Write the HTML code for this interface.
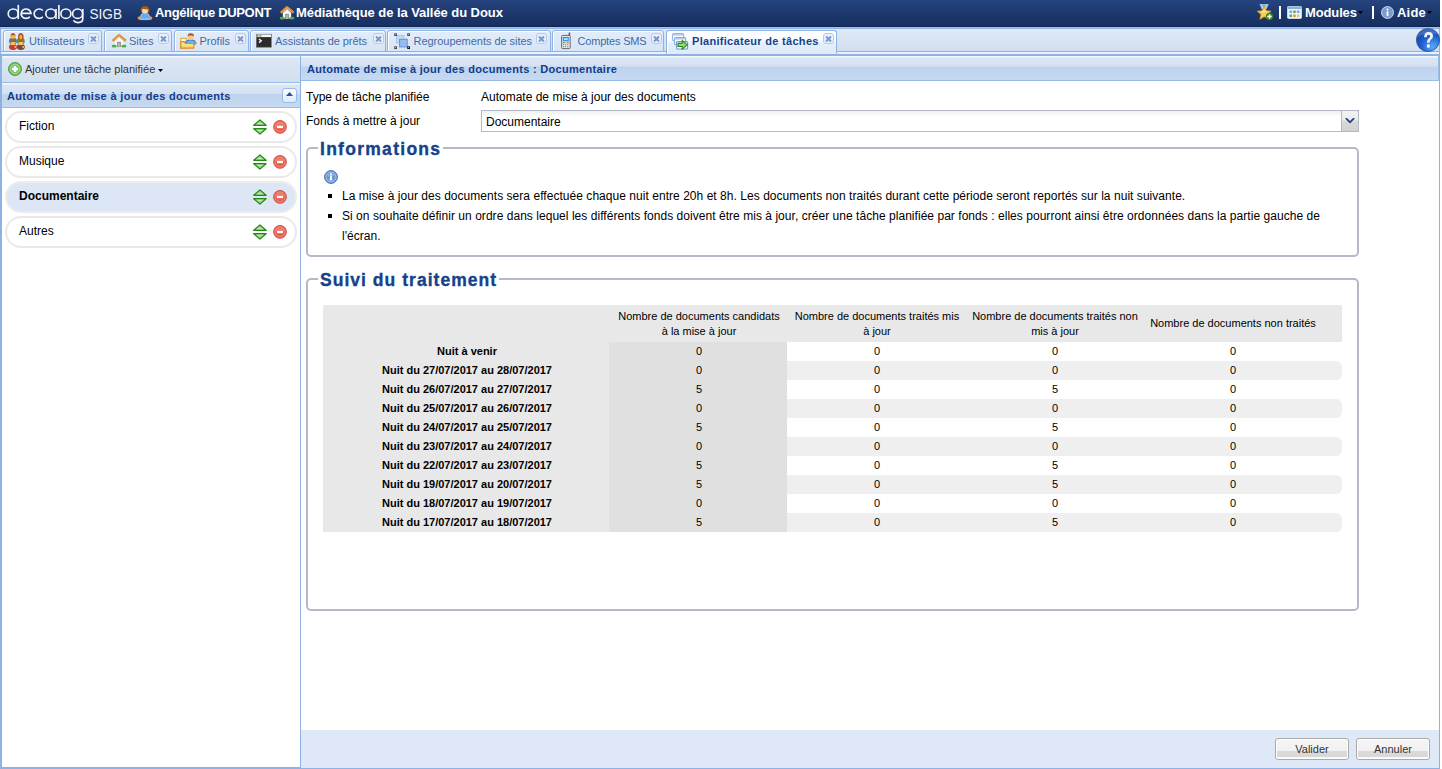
<!DOCTYPE html>
<html><head><meta charset="utf-8">
<style>
*{margin:0;padding:0;box-sizing:border-box}
html,body{width:1442px;height:769px;overflow:hidden;background:#fff;font-family:"Liberation Sans",sans-serif}
.a{position:absolute}
svg{position:absolute;overflow:visible}
#hdr{position:absolute;left:0;top:0;width:1440px;height:27px;background:linear-gradient(#25447f,#1d386d 50%,#183062 92%,#10254f);}
#hdr .t{position:absolute;color:#fff;font-weight:bold;font-size:13px;white-space:nowrap;top:6px;line-height:14px}
#strip{position:absolute;left:0;top:27px;width:1440px;height:29px;background:linear-gradient(#e1e9f5,#cedbee);border-left:1px solid #8db2e3;border-right:1px solid #8db2e3}
#strip .top{position:absolute;left:0;top:0;width:100%;height:2px;background:linear-gradient(#a3c1ea 50%,#8fb3e3 50%)}
#strip .bot{position:absolute;left:0;top:24px;width:100%;height:5px;background:linear-gradient(#8db2e3 20%,#e8f1fc 20%,#e8f1fc 60%,#8db2e3 60%)}
.tab{position:absolute;top:3px;height:22px;border:1px solid #8db2e3;border-radius:3px 3px 0 0;background:linear-gradient(#e3edfa,#d5e4f7);box-shadow:inset 1px 1px 0 #fff}
.tab .tx{position:absolute;left:25px;top:4px;font-size:11px;color:#416aa3;white-space:nowrap;line-height:13px}
.tab .cl{position:absolute;top:2px;width:11px;height:11px;border:1px solid #b3caed;border-radius:3px;background:#eaf1fb}
.tab .cl:before,.tab .cl:after{content:"";position:absolute;left:1px;top:4px;width:7px;height:2px;background:#7898cc;transform:rotate(45deg)}
.tab .cl:after{transform:rotate(-45deg)}
.tab.act{height:24px;border-bottom:0;background:linear-gradient(#fff 0,#f8fbff 9px,#e4eefb 13px,#dfeafa);}
.tab.act .tx{color:#15428b;font-weight:bold}

#lp{position:absolute;left:0;top:56px;width:301px;height:713px;border-left:2px solid #8db2e3;border-right:1px solid #8db2e3;border-bottom:2px solid #8db2e3;background:#fff}
#ltb{position:absolute;left:0;top:0;width:298px;height:27px;background:linear-gradient(#f3f7fc 0,#f3f7fc 1px,#dde7f4 2px,#d2dff0);border-bottom:1px solid #99bbe8}
#lhd{position:absolute;left:0;top:27px;width:298px;height:25px;background:linear-gradient(#f1f6fc 0,#f1f6fc 1px,#dbe6f5 2px,#d4e1f3 11px,#bed3ef 11px,#c7d9f1);border-bottom:1px solid #99bbe8}
.pill{position:absolute;left:3px;width:292px;height:32px;border:2px solid #e9e9e9;border-radius:16px;background:#fff}
.pill .tx{position:absolute;left:12px;top:6px;font-size:12px;color:#000;line-height:14px}
.pill.sel{background:#dde6f4;border-color:#ececec}
.pill.sel .tx{font-weight:bold;font-size:12px;top:6px}
#rp{position:absolute;left:300px;top:56px;width:1140px;height:713px;border-left:1px solid #8db2e3;border-right:1px solid #8db2e3;border-bottom:1px solid #8db2e3;background:#fff}
#rhd{position:absolute;left:0;top:0;width:1138px;border-right:1px solid #99bbe8;height:25px;background:linear-gradient(#f1f6fc 0,#f1f6fc 1px,#dbe6f5 2px,#d4e1f3 10px,#bed3ef 11px,#c7d9f1);border-bottom:1px solid #99bbe8}
.hdtx{position:absolute;font-weight:bold;font-size:11px;color:#113d89;white-space:nowrap;line-height:13px}
.lbl{position:absolute;font-size:12px;color:#000;white-space:nowrap;line-height:14px}
.fs{position:absolute;border:2px solid #b5b8c8;border-radius:5px}
.lg{position:absolute;background:#fff;-webkit-text-stroke:.35px #15428b;padding:0 2px 0 2px;font-size:17.5px;font-weight:bold;color:#15428b;letter-spacing:.88px;line-height:18px;white-space:nowrap}
.btn{position:absolute;top:682px;width:74px;height:22px;border:1px solid #a9a9a9;border-radius:3px;background:linear-gradient(#f4f4f4 0,#f1f1f1 12px,#dadada 12px,#d8d8d8 18px,#f8f8f8 18px);box-shadow:inset 0 0 0 1px #fff;font-size:11px;color:#333;text-align:center;line-height:21px}
table{border-collapse:collapse}
#tb{position:absolute;left:15px;top:25px;width:1019px;font-size:11px;color:#000}
</style></head><body>
<div id="hdr">
  <svg style="left:0;top:0" width="130" height="27" viewBox="0 0 130 27"><g fill="none" stroke="#f3f5f9" stroke-width="1.65">
<ellipse cx="13.2" cy="13.7" rx="5" ry="4.7"/><path d="M18.3 4.9 V19.1"/>
<path d="M21.1 13.3 H31 A4.95 4.7 0 1 0 29.9 16.7"/>
<path d="M42.8 10.5 A5 4.7 0 1 0 42.8 16.9"/>
<ellipse cx="50.8" cy="13.7" rx="5" ry="4.7"/><path d="M56 8.9 V19.1"/>
<path d="M58.9 4.9 V19.1"/>
<ellipse cx="65.9" cy="13.7" rx="5" ry="4.7"/>
<ellipse cx="77.6" cy="13.7" rx="5" ry="4.7"/><path d="M82.8 8.9 V18.5 Q82.8 22.6 78 22.6 Q74.8 22.6 73.4 20.4"/>
</g><text x="89.5" y="19" font-family="Liberation Sans" font-size="15" fill="#eef1f7" textLength="32.5" lengthAdjust="spacingAndGlyphs">SIGB</text></svg>
  <!-- user icon -->
  <svg style="left:137px;top:5px" width="16" height="16" viewBox="0 0 16 16"><path d="M5.2 8.6 L10.8 8.6 L13.6 12.6 L12.6 14.6 H3.4 L2.4 12.6Z" fill="#5eaaf4" stroke="#d6e8fb" stroke-width=".7"/><path d="M4 12.8 Q8 14.2 12 12.8 V14.2 H4Z" fill="#7cc0ff"/><circle cx="2.3" cy="13.1" r="1.7" fill="#f39a35"/><circle cx="13.7" cy="13.1" r="1.7" fill="#f39a35"/><path d="M3.6 5.5 Q3.6 1 8 1 Q12.4 1 12.4 5.5 L11.6 8.2 H4.4Z" fill="#a55a1a"/><path d="M5 5 Q5.5 3.2 8 3.8 Q10.8 3 11 5 L10.6 7.8 Q8 9 5.4 7.8Z" fill="#f8d8b0"/><path d="M6.5 3 Q8 4.8 11 3.6" stroke="#7a3e10" stroke-width=".8" fill="none"/></svg>
  <div class="t" style="left:155px;letter-spacing:-0.33px">Angélique DUPONT</div>
  <!-- house icon -->
  <svg style="left:279px;top:5px" width="16" height="16" viewBox="0 0 18 18"><path d="M4.3 15.6 V8.6 L9 4.3 L13.7 8.6 V15.6Z" fill="#f6f6f6"/><path d="M1.8 8.8 L9 2.6 L16.6 8.8" fill="none" stroke="#d48a35" stroke-width="2.8" stroke-linejoin="round"/><path d="M3 8.2 L9 3 L15.4 8.2" fill="none" stroke="#e9b874" stroke-width="1"/><rect x="7" y="10" width="4" height="5.8" fill="#7d7d7d"/><rect x="7.8" y="10.8" width="2.4" height="5" fill="#b3b3b3"/><ellipse cx="3.6" cy="14.8" rx="2.9" ry="1.5" fill="#4fae3c"/><ellipse cx="14.5" cy="14.8" rx="2.9" ry="1.5" fill="#4fae3c"/></svg>
  <div class="t" style="left:296px;letter-spacing:-0.06px">Médiathèque de la Vallée du Doux</div>
  <!-- medal star -->
  <svg style="left:1252px;top:0" width="24" height="24" viewBox="0 0 24 24"><path d="M7.3 4 H16.9 L14.5 9.5 H9.7Z" fill="#7fb6e6"/><path d="M9 4.3 L11 8.8 M15.2 4.3 L13.2 8.8" stroke="#cfe6fa" stroke-width=".9"/><path d="M12.20 6.10 L14.14 10.73 L19.14 11.14 L15.34 14.42 L16.49 19.31 L12.20 16.70 L7.91 19.31 L9.06 14.42 L5.26 11.14 L10.26 10.73Z" fill="#f6cf55" stroke="#e39a17" stroke-width=".8" stroke-linejoin="round"/><path d="M9.5 12.5 Q12 9.5 14.5 12" stroke="#fbeaa8" stroke-width="1.2" fill="none"/><circle cx="17.5" cy="16.6" r="3.5" fill="#3f8f22" stroke="#2a6e14" stroke-width=".5"/><path d="M17.5 14.4 V18.8 M15.3 16.6 H19.7" stroke="#fff" stroke-width="1.5"/></svg>
  <div class="a" style="left:1279px;top:6px;width:2px;height:13px;background:#fff"></div>
  <!-- grid icon -->
  <svg style="left:1287px;top:6px" width="15" height="13" viewBox="0 0 15 13"><rect x="0.5" y="0.5" width="14" height="12" rx="1" fill="#eef3fa" stroke="#c9d7ea"/><rect x="0.5" y="0.5" width="14" height="2.5" fill="#8fb0d8"/><rect x="2.5" y="4.5" width="2.5" height="2.5" fill="#6fb0e8"/><rect x="6.2" y="4.5" width="2.5" height="2.5" fill="#58b04a"/><rect x="9.9" y="4.5" width="2.5" height="2.5" fill="#6fb0e8"/><rect x="2.5" y="8.5" width="2.5" height="2.5" fill="#58b04a"/><rect x="6.2" y="8.5" width="2.5" height="2.5" fill="#f08a3a"/><rect x="9.9" y="8.5" width="2.5" height="2.5" fill="#f2c94c"/></svg>
  <div class="t" style="left:1305px;letter-spacing:-0.13px">Modules</div>
  <svg style="left:1358px;top:11px" width="6" height="4" viewBox="0 0 6 4"><path d="M0 0 H5 L2.5 3Z" fill="#000"/></svg>
  <div class="a" style="left:1372px;top:6px;width:2px;height:13px;background:#fff"></div>
  <!-- info icon -->
  <svg style="left:1381px;top:6px" width="13" height="13" viewBox="0 0 13 13"><circle cx="6.5" cy="6.5" r="6" fill="#7d9ccc" stroke="#c7d5ea" stroke-width="1"/><circle cx="6.5" cy="3.6" r="1" fill="#fff"/><rect x="5.6" y="5.3" width="1.8" height="4.8" fill="#fff"/></svg>
  <div class="t" style="left:1397px;letter-spacing:0.2px">Aide</div>
  <svg style="left:1427px;top:11px" width="6" height="4" viewBox="0 0 6 4"><path d="M0 0 H5 L2.5 3Z" fill="#000"/></svg>
</div>

<div id="strip">
  <div class="top"></div>
  <div class="bot"></div>
  <div class="tab" style="left:2px;width:99px"><svg style="left:5px;top:2px" width="16" height="16" viewBox="0 0 16 16"><ellipse cx="4" cy="8.2" rx="3.9" ry="3.6" fill="#3f7ea6"/><ellipse cx="11.8" cy="8.2" rx="3.9" ry="3.6" fill="#55953a"/><path d="M9 4 Q9 0 11.8 0 Q14.6 0 14.6 4 L14.2 6.5 H9.4Z" fill="#b25a1c"/><circle cx="4" cy="3.2" r="2.6" fill="#f7b545"/><path d="M1.4 2.6 Q2 0 4 0 Q6.4 0 6.6 2.6 Q4.5 1.6 1.4 2.6Z" fill="#a85418"/><path d="M10.2 3.6 Q11 1.8 12.8 1.8 L13 5.6 Q12 6.4 11 6 Z" fill="#f7b545"/><ellipse cx="4" cy="14" rx="4" ry="3" fill="#cf3a26"/><ellipse cx="11.8" cy="14" rx="4" ry="3" fill="#7a4a2a"/><circle cx="4" cy="9.8" r="2.5" fill="#f9c060"/><path d="M1.5 9.3 Q2 6.9 4 6.9 Q6.2 6.9 6.5 9.3 Q4.3 8.4 1.5 9.3Z" fill="#a85418"/><circle cx="11.8" cy="9.8" r="2.5" fill="#f9c060"/><path d="M9.3 9.3 Q9.8 6.9 11.8 6.9 Q14 6.9 14.3 9.3 Q12.1 8.4 9.3 9.3Z" fill="#a85418"/><rect x="5.6" y="13.2" width="1.6" height="1.6" fill="#f2d6d0"/><rect x="13.4" y="13.2" width="1.6" height="1.6" fill="#e0d0c6"/></svg><div class="tx" style="left:25px;letter-spacing:.09px">Utilisateurs</div><div class="cl" style="left:84px"></div></div>
  <div class="tab" style="left:103px;width:68px"><svg style="left:6px;top:2px" width="16" height="16" viewBox="0 0 18 18"><path d="M4.3 15.6 V8.6 L9 4.3 L13.7 8.6 V15.6Z" fill="#f6f6f6"/><path d="M1.8 8.8 L9 2.6 L16.6 8.8" fill="none" stroke="#d48a35" stroke-width="2.8" stroke-linejoin="round"/><path d="M3 8.2 L9 3 L15.4 8.2" fill="none" stroke="#e9b874" stroke-width="1"/><rect x="7" y="10" width="4" height="5.8" fill="#7d7d7d"/><rect x="7.8" y="10.8" width="2.4" height="5" fill="#b3b3b3"/><ellipse cx="3.6" cy="14.8" rx="2.9" ry="1.5" fill="#4fae3c"/><ellipse cx="14.5" cy="14.8" rx="2.9" ry="1.5" fill="#4fae3c"/></svg><div class="tx" style="left:24px">Sites</div><div class="cl" style="left:53px"></div></div>
  <div class="tab" style="left:173px;width:75px"><svg style="left:5px;top:2px" width="17" height="16" viewBox="0 0 17 16"><defs><linearGradient id="fg" x1="0" y1="0" x2="0" y2="1"><stop offset="0" stop-color="#cfe6c0"/><stop offset=".45" stop-color="#f7e48c"/><stop offset="1" stop-color="#f3d456"/></linearGradient></defs><rect x="0.8" y="5.3" width="5.5" height="9.8" fill="#fffbe8" stroke="#ddb032" stroke-width="1.1"/><ellipse cx="10.6" cy="9.6" rx="5.4" ry="3.3" fill="#2f7fe0"/><ellipse cx="10.6" cy="9.9" rx="4" ry="2.4" fill="#66b8ff"/><circle cx="15.6" cy="10.2" r="1.2" fill="#f08c2c"/><circle cx="10.8" cy="3.8" r="3.2" fill="#f6c996"/><path d="M7.6 3.6 Q7.6 0.3 10.8 0.3 Q14 0.3 14 3.6 Q12.5 2 10.8 2.6 Q9 2 7.6 3.6Z" fill="#a65528"/><path d="M0.8 15.1 V8.6 H4.5 L5.2 10.4 H13.8 V15.1Z" fill="url(#fg)" stroke="#e3892a" stroke-width="1.2" stroke-linejoin="round"/></svg><div class="tx" style="left:24.5px">Profils</div><div class="cl" style="left:60px"></div></div>
  <div class="tab" style="left:249px;width:136px"><svg style="left:5px;top:1px" width="16" height="16" viewBox="0 0 16 16"><rect x="0.3" y="2.2" width="15" height="13" fill="#2c2c2c" stroke="#6a6e78" stroke-width=".6"/><rect x="0.6" y="2.5" width="14.4" height="2.6" fill="#f4f4f6"/><circle cx="1.6" cy="3.8" r=".9" fill="#e84a3a"/><circle cx="3.1" cy="3.8" r=".9" fill="#f2c230"/><circle cx="4.6" cy="3.8" r=".9" fill="#3cb43a"/><path d="M3 7 L5.2 8.8 L3 10.6" stroke="#f0f0f0" stroke-width="1.5" fill="none"/></svg><div class="tx" style="left:24px;letter-spacing:-.05px">Assistants de prêts</div><div class="cl" style="left:122px"></div></div>
  <div class="tab" style="left:386px;width:164px"><svg style="left:5px;top:1px" width="18" height="18" viewBox="0 0 18 18"><rect x="3.4" y="3.4" width="7.6" height="7.4" fill="#c2d7f7" stroke="#a3c3f3" stroke-width=".9"/><rect x="6.6" y="7.3" width="7.6" height="7.6" fill="#9dbbea" stroke="#5f90e0" stroke-width="1"/><g fill="#484848"><rect x="1.2" y="1.2" width="2.8" height="2.8" rx=".6"/><rect x="14.2" y="1.2" width="2.8" height="2.8" rx=".6"/><rect x="1.2" y="14.2" width="2.8" height="2.8" rx=".6"/><rect x="14.2" y="14.2" width="2.8" height="2.8" rx=".6" fill="#111"/></g><g fill="#e8e8e8"><circle cx="2.6" cy="2.6" r=".5"/><circle cx="15.6" cy="2.6" r=".5"/><circle cx="2.6" cy="15.6" r=".5"/><circle cx="15.6" cy="15.6" r=".5"/></g></svg><div class="tx" style="left:25.5px;letter-spacing:-.03px">Regroupements de sites</div><div class="cl" style="left:148px"></div></div>
  <div class="tab" style="left:551px;width:112px"><svg style="left:7px;top:1px" width="12" height="18" viewBox="0 0 12 18"><rect x="8.6" y="0.6" width="1.6" height="4" fill="#5a5a5a"/><rect x="1.6" y="3.4" width="8.6" height="13.2" rx="1.2" fill="#e4e4e4" stroke="#6a6a6a" stroke-width="1"/><rect x="2.8" y="5" width="6" height="4.3" rx=".6" fill="#2b8ff5"/><rect x="3.9" y="6.2" width="3.8" height="1.9" fill="#c4e2ff"/><rect x="2.8" y="10.1" width="2.8" height="1.1" fill="#4cb24c"/><circle cx="7.9" cy="10.6" r=".75" fill="#e03434"/><g fill="#7a7a7a"><circle cx="3.6" cy="12.6" r=".6"/><circle cx="5.7" cy="12.6" r=".6"/><circle cx="7.8" cy="12.6" r=".6"/><circle cx="3.6" cy="14.6" r=".6"/><circle cx="5.7" cy="14.6" r=".6"/><circle cx="7.8" cy="14.6" r=".6"/></g></svg><div class="tx" style="left:24.5px;letter-spacing:-.18px">Comptes SMS</div><div class="cl" style="left:98px"></div></div>
  <div class="tab act" style="left:665px;width:171px"><svg style="left:5px;top:2px" width="17" height="17" viewBox="0 0 17 17"><rect x="0.6" y="0.6" width="11" height="7.2" rx="1" fill="#fff" stroke="#93b5e6" stroke-width="1.1"/><rect x="1" y="1" width="10.2" height="1.6" fill="#b4cdef"/><rect x="2.6" y="4.6" width="11" height="7.2" rx="1" fill="#fff" stroke="#86aae2" stroke-width="1.1"/><rect x="3" y="5" width="10.2" height="1.6" fill="#b4cdef"/><rect x="4.6" y="8.6" width="11" height="7.4" rx="1" fill="#fff" stroke="#6f96d6" stroke-width="1.1"/><path d="M6 10.4 H10.2 V7.4 L15.4 11.9 L10.2 16.3 V13.4 H6Z" fill="#8dca78" stroke="#249014" stroke-width="1.1" stroke-linejoin="round"/><path d="M7.2 11.9 H11.6" stroke="#bfe3b0" stroke-width="1"/></svg><div class="tx" style="left:25px;letter-spacing:.3px">Planificateur de tâches</div><div class="cl" style="left:156px"></div></div>
  <!-- help -->
  <svg style="left:1415px;top:1px" width="24" height="24" viewBox="0 0 24 24"><defs><radialGradient id="hg" cx=".7" cy=".8" r=".8"><stop offset="0" stop-color="#5aa8f5"/><stop offset=".6" stop-color="#1e5fd0"/><stop offset="1" stop-color="#1648a8"/></radialGradient></defs><circle cx="12" cy="12" r="11.6" fill="url(#hg)" stroke="#1a3f8f" stroke-width=".6"/><path d="M1 10 Q6 4 22 6 Q16 0 12 0.5 Q3 1 1 10Z" fill="#fff" opacity=".18"/><path d="M8 9.2 Q8.3 4 12.6 4 Q17 4 17 8.2 Q17 10.7 14.6 12 Q13.6 12.6 13.6 14.8 H11 Q10.8 11.6 13 10.3 Q14.2 9.5 14.2 8.3 Q14.1 6.8 12.5 6.8 Q10.9 6.8 10.7 9.2Z" fill="#f2f2f2"/><rect x="10.9" y="16.3" width="2.9" height="3.4" rx="1" fill="#f2f2f2"/></svg>
</div>
<div id="lp">
<div id="ltb"><svg style="left:6px;top:6px" width="14" height="14" viewBox="0 0 14 14"><circle cx="7" cy="7" r="6.5" fill="#5cae48" stroke="#3a9530" stroke-width=".8"/><circle cx="7" cy="7" r="5" fill="#7cc468" stroke="#c0e6b2" stroke-width=".8"/><path d="M7 4 V10 M4 7 H10" stroke="#fff" stroke-width="2.4"/></svg><div class="lbl" style="left:23px;top:6px;font-size:11px;color:#333">Ajouter une tâche planifiée</div><svg style="left:156px;top:13px" width="5" height="3" viewBox="0 0 5 3"><path d="M0 0 H5 L2.5 3Z" fill="#000"/></svg></div>
<div id="lhd"><div class="hdtx" style="left:5px;top:7px;letter-spacing:.33px">Automate de mise à jour des documents</div>
<div class="a" style="left:280px;top:5px;width:15px;height:15px;border:1px solid #99bbe8;border-radius:3px;background:linear-gradient(#fdfeff,#dbeafb)"><svg style="left:3px;top:3px" width="7" height="4" viewBox="0 0 7 4"><path d="M0 4 L3.5 0 L7 4Z" fill="#2a4fa8"/></svg></div></div>
<div class="pill" style="top:55px"><div class="tx">Fiction</div><svg style="left:246px;top:6px" width="14" height="16" viewBox="0 0 14 16"><path d="M6.9 0.9 L13.1 6.3 H0.7Z" fill="#9fd08c" stroke="#228b14" stroke-width="1.25" stroke-linejoin="round"/><path d="M6.9 15.1 L13.1 9.7 H0.7Z" fill="#9fd08c" stroke="#228b14" stroke-width="1.25" stroke-linejoin="round"/><path d="M4.5 4.6 H9.3 M4.5 11.4 H9.3" stroke="#d6ecd0" stroke-width=".8"/></svg><svg style="left:266px;top:7px" width="14" height="14" viewBox="0 0 14 14"><circle cx="7" cy="6.9" r="6.4" fill="#e8604f" stroke="#cf4a3c" stroke-width=".9"/><circle cx="7" cy="6.9" r="5" fill="none" stroke="#f6a59a" stroke-width=".6"/><path d="M3 3.5 Q7 1 11 3.5 L11 6 H3Z" fill="#f4907f" opacity=".6"/><rect x="4" y="5.9" width="6" height="2.2" fill="#fff"/></svg></div><div class="pill" style="top:90px"><div class="tx">Musique</div><svg style="left:246px;top:6px" width="14" height="16" viewBox="0 0 14 16"><path d="M6.9 0.9 L13.1 6.3 H0.7Z" fill="#9fd08c" stroke="#228b14" stroke-width="1.25" stroke-linejoin="round"/><path d="M6.9 15.1 L13.1 9.7 H0.7Z" fill="#9fd08c" stroke="#228b14" stroke-width="1.25" stroke-linejoin="round"/><path d="M4.5 4.6 H9.3 M4.5 11.4 H9.3" stroke="#d6ecd0" stroke-width=".8"/></svg><svg style="left:266px;top:7px" width="14" height="14" viewBox="0 0 14 14"><circle cx="7" cy="6.9" r="6.4" fill="#e8604f" stroke="#cf4a3c" stroke-width=".9"/><circle cx="7" cy="6.9" r="5" fill="none" stroke="#f6a59a" stroke-width=".6"/><path d="M3 3.5 Q7 1 11 3.5 L11 6 H3Z" fill="#f4907f" opacity=".6"/><rect x="4" y="5.9" width="6" height="2.2" fill="#fff"/></svg></div><div class="pill sel" style="top:125px"><div class="tx">Documentaire</div><svg style="left:246px;top:6px" width="14" height="16" viewBox="0 0 14 16"><path d="M6.9 0.9 L13.1 6.3 H0.7Z" fill="#9fd08c" stroke="#228b14" stroke-width="1.25" stroke-linejoin="round"/><path d="M6.9 15.1 L13.1 9.7 H0.7Z" fill="#9fd08c" stroke="#228b14" stroke-width="1.25" stroke-linejoin="round"/><path d="M4.5 4.6 H9.3 M4.5 11.4 H9.3" stroke="#d6ecd0" stroke-width=".8"/></svg><svg style="left:266px;top:7px" width="14" height="14" viewBox="0 0 14 14"><circle cx="7" cy="6.9" r="6.4" fill="#e8604f" stroke="#cf4a3c" stroke-width=".9"/><circle cx="7" cy="6.9" r="5" fill="none" stroke="#f6a59a" stroke-width=".6"/><path d="M3 3.5 Q7 1 11 3.5 L11 6 H3Z" fill="#f4907f" opacity=".6"/><rect x="4" y="5.9" width="6" height="2.2" fill="#fff"/></svg></div><div class="pill" style="top:160px"><div class="tx">Autres</div><svg style="left:246px;top:6px" width="14" height="16" viewBox="0 0 14 16"><path d="M6.9 0.9 L13.1 6.3 H0.7Z" fill="#9fd08c" stroke="#228b14" stroke-width="1.25" stroke-linejoin="round"/><path d="M6.9 15.1 L13.1 9.7 H0.7Z" fill="#9fd08c" stroke="#228b14" stroke-width="1.25" stroke-linejoin="round"/><path d="M4.5 4.6 H9.3 M4.5 11.4 H9.3" stroke="#d6ecd0" stroke-width=".8"/></svg><svg style="left:266px;top:7px" width="14" height="14" viewBox="0 0 14 14"><circle cx="7" cy="6.9" r="6.4" fill="#e8604f" stroke="#cf4a3c" stroke-width=".9"/><circle cx="7" cy="6.9" r="5" fill="none" stroke="#f6a59a" stroke-width=".6"/><path d="M3 3.5 Q7 1 11 3.5 L11 6 H3Z" fill="#f4907f" opacity=".6"/><rect x="4" y="5.9" width="6" height="2.2" fill="#fff"/></svg></div></div><div id="rp">
<div id="rhd"><div class="hdtx" style="left:6px;top:7px;letter-spacing:.3px">Automate de mise à jour des documents : Documentaire</div></div>
<div class="lbl" style="left:5px;top:34px">Type de tâche planifiée</div>
<div class="lbl" style="left:180px;top:34px">Automate de mise à jour des documents</div>
<div class="lbl" style="left:5px;top:58px">Fonds à mettre à jour</div>
<div class="a" style="left:180px;top:54px;width:878px;height:22px;border:1px solid #b5b8c8;background:linear-gradient(#eef1f1,#fff 6px)"><div class="lbl" style="left:4px;top:4px">Documentaire</div>
<div class="a" style="left:859px;top:-1px;width:18px;height:22px;border:1px solid #b5b8c8;border-radius:0 2px 0 0;background:linear-gradient(#f2f2f2 0,#ececec 9px,#d8d8d8 10px,#d2d2d2)"><svg style="left:3px;top:7px" width="10" height="6" viewBox="0 0 10 6"><path d="M0 0.5 L2 0 L5 3 L8 0 L10 0.5 L5 5.5Z" fill="#1f3f86"/></svg></div></div>
<div class="fs" style="left:5px;top:91px;width:1053px;height:110px">
<div class="lg" style="left:10px;top:-9px;letter-spacing:1.28px">Informations</div>
<svg style="left:16px;top:21px" width="14" height="14" viewBox="0 0 14 14"><circle cx="7" cy="7" r="6.4" fill="#6f98cf" stroke="#3e70bf" stroke-width="1"/><circle cx="7" cy="7" r="5" fill="none" stroke="#bcd2ee" stroke-width=".7"/><path d="M3.6 4.4 Q7 2.2 10.4 4.4 L10 6 H4Z" fill="#9ab8e0" opacity=".6"/><rect x="6.1" y="3.3" width="1.8" height="1.5" fill="#fff"/><path d="M5.9 5.6 H7.9 V9.4 H8.7 V10.3 H5.3 V9.4 H6.1 V6.4 H5.9Z" fill="#fff"/></svg>
<div class="a" style="left:20px;top:45px;width:4px;height:4px;background:#000"></div>
<div class="a" style="left:20px;top:65px;width:4px;height:4px;background:#000"></div>
<div class="lbl" style="left:34px;top:37px;line-height:20px;width:1010px;white-space:normal;letter-spacing:.04px">La mise à jour des documents sera effectuée chaque nuit entre 20h et 8h. Les documents non traités durant cette période seront reportés sur la nuit suivante.<br>Si on souhaite définir un ordre dans lequel les différents fonds doivent être mis à jour, créer une tâche planifiée par fonds : elles pourront ainsi être ordonnées dans la partie gauche de l'écran.</div>
</div>
<div class="fs" style="left:5px;top:222px;width:1053px;height:333px">
<div class="lg" style="left:10px;top:-9px;letter-spacing:1.03px">Suivi du traitement</div>
<div id="tb">
<div class="a" style="left:0;top:0;width:1019px;height:37px;background:#e8e8e8"></div>
<div class="a" style="left:0;top:37px;width:286px;height:190px;background:#e8e8e8"></div>
<div class="a" style="left:286px;top:4px;width:178px;text-align:center;padding-left:2px;line-height:15px">Nombre de documents candidats<br>à la mise à jour</div>
<div class="a" style="left:464px;top:4px;width:178px;text-align:center;padding-left:2px;line-height:15px">Nombre de documents traités mis<br>à jour</div>
<div class="a" style="left:642px;top:4px;width:178px;text-align:center;padding-left:2px;line-height:15px">Nombre de documents traités non<br>mis à jour</div>
<div class="a" style="left:820px;top:11px;width:178px;text-align:center;padding-left:2px;line-height:15px;white-space:nowrap">Nombre de documents non traités</div>
<div class="a" style="left:0;top:37px;width:286px;height:19px;text-align:center;padding-left:2px;font-weight:bold;line-height:19px">Nuit à venir</div><div class="a" style="left:286px;top:37px;width:178px;height:19px;text-align:center;padding-left:2px;line-height:19px;background:#e0e0e0">0</div><div class="a" style="left:464px;top:37px;width:178px;height:19px;text-align:center;padding-left:2px;line-height:19px">0</div><div class="a" style="left:642px;top:37px;width:178px;height:19px;text-align:center;padding-left:2px;line-height:19px">0</div><div class="a" style="left:820px;top:37px;width:178px;height:19px;text-align:center;padding-left:2px;line-height:19px">0</div><div class="a" style="left:286px;top:56px;width:733px;height:19px;background:#efefef;border-radius:0 6px 6px 0"></div><div class="a" style="left:0;top:56px;width:286px;height:19px;text-align:center;padding-left:2px;font-weight:bold;line-height:19px">Nuit du 27/07/2017 au 28/07/2017</div><div class="a" style="left:286px;top:56px;width:178px;height:19px;text-align:center;padding-left:2px;line-height:19px;background:#e0e0e0">0</div><div class="a" style="left:464px;top:56px;width:178px;height:19px;text-align:center;padding-left:2px;line-height:19px">0</div><div class="a" style="left:642px;top:56px;width:178px;height:19px;text-align:center;padding-left:2px;line-height:19px">0</div><div class="a" style="left:820px;top:56px;width:178px;height:19px;text-align:center;padding-left:2px;line-height:19px">0</div><div class="a" style="left:0;top:75px;width:286px;height:19px;text-align:center;padding-left:2px;font-weight:bold;line-height:19px">Nuit du 26/07/2017 au 27/07/2017</div><div class="a" style="left:286px;top:75px;width:178px;height:19px;text-align:center;padding-left:2px;line-height:19px;background:#e0e0e0">5</div><div class="a" style="left:464px;top:75px;width:178px;height:19px;text-align:center;padding-left:2px;line-height:19px">0</div><div class="a" style="left:642px;top:75px;width:178px;height:19px;text-align:center;padding-left:2px;line-height:19px">5</div><div class="a" style="left:820px;top:75px;width:178px;height:19px;text-align:center;padding-left:2px;line-height:19px">0</div><div class="a" style="left:286px;top:94px;width:733px;height:19px;background:#efefef;border-radius:0 6px 6px 0"></div><div class="a" style="left:0;top:94px;width:286px;height:19px;text-align:center;padding-left:2px;font-weight:bold;line-height:19px">Nuit du 25/07/2017 au 26/07/2017</div><div class="a" style="left:286px;top:94px;width:178px;height:19px;text-align:center;padding-left:2px;line-height:19px;background:#e0e0e0">0</div><div class="a" style="left:464px;top:94px;width:178px;height:19px;text-align:center;padding-left:2px;line-height:19px">0</div><div class="a" style="left:642px;top:94px;width:178px;height:19px;text-align:center;padding-left:2px;line-height:19px">0</div><div class="a" style="left:820px;top:94px;width:178px;height:19px;text-align:center;padding-left:2px;line-height:19px">0</div><div class="a" style="left:0;top:113px;width:286px;height:19px;text-align:center;padding-left:2px;font-weight:bold;line-height:19px">Nuit du 24/07/2017 au 25/07/2017</div><div class="a" style="left:286px;top:113px;width:178px;height:19px;text-align:center;padding-left:2px;line-height:19px;background:#e0e0e0">5</div><div class="a" style="left:464px;top:113px;width:178px;height:19px;text-align:center;padding-left:2px;line-height:19px">0</div><div class="a" style="left:642px;top:113px;width:178px;height:19px;text-align:center;padding-left:2px;line-height:19px">5</div><div class="a" style="left:820px;top:113px;width:178px;height:19px;text-align:center;padding-left:2px;line-height:19px">0</div><div class="a" style="left:286px;top:132px;width:733px;height:19px;background:#efefef;border-radius:0 6px 6px 0"></div><div class="a" style="left:0;top:132px;width:286px;height:19px;text-align:center;padding-left:2px;font-weight:bold;line-height:19px">Nuit du 23/07/2017 au 24/07/2017</div><div class="a" style="left:286px;top:132px;width:178px;height:19px;text-align:center;padding-left:2px;line-height:19px;background:#e0e0e0">0</div><div class="a" style="left:464px;top:132px;width:178px;height:19px;text-align:center;padding-left:2px;line-height:19px">0</div><div class="a" style="left:642px;top:132px;width:178px;height:19px;text-align:center;padding-left:2px;line-height:19px">0</div><div class="a" style="left:820px;top:132px;width:178px;height:19px;text-align:center;padding-left:2px;line-height:19px">0</div><div class="a" style="left:0;top:151px;width:286px;height:19px;text-align:center;padding-left:2px;font-weight:bold;line-height:19px">Nuit du 22/07/2017 au 23/07/2017</div><div class="a" style="left:286px;top:151px;width:178px;height:19px;text-align:center;padding-left:2px;line-height:19px;background:#e0e0e0">5</div><div class="a" style="left:464px;top:151px;width:178px;height:19px;text-align:center;padding-left:2px;line-height:19px">0</div><div class="a" style="left:642px;top:151px;width:178px;height:19px;text-align:center;padding-left:2px;line-height:19px">5</div><div class="a" style="left:820px;top:151px;width:178px;height:19px;text-align:center;padding-left:2px;line-height:19px">0</div><div class="a" style="left:286px;top:170px;width:733px;height:19px;background:#efefef;border-radius:0 6px 6px 0"></div><div class="a" style="left:0;top:170px;width:286px;height:19px;text-align:center;padding-left:2px;font-weight:bold;line-height:19px">Nuit du 19/07/2017 au 20/07/2017</div><div class="a" style="left:286px;top:170px;width:178px;height:19px;text-align:center;padding-left:2px;line-height:19px;background:#e0e0e0">5</div><div class="a" style="left:464px;top:170px;width:178px;height:19px;text-align:center;padding-left:2px;line-height:19px">0</div><div class="a" style="left:642px;top:170px;width:178px;height:19px;text-align:center;padding-left:2px;line-height:19px">5</div><div class="a" style="left:820px;top:170px;width:178px;height:19px;text-align:center;padding-left:2px;line-height:19px">0</div><div class="a" style="left:0;top:189px;width:286px;height:19px;text-align:center;padding-left:2px;font-weight:bold;line-height:19px">Nuit du 18/07/2017 au 19/07/2017</div><div class="a" style="left:286px;top:189px;width:178px;height:19px;text-align:center;padding-left:2px;line-height:19px;background:#e0e0e0">0</div><div class="a" style="left:464px;top:189px;width:178px;height:19px;text-align:center;padding-left:2px;line-height:19px">0</div><div class="a" style="left:642px;top:189px;width:178px;height:19px;text-align:center;padding-left:2px;line-height:19px">0</div><div class="a" style="left:820px;top:189px;width:178px;height:19px;text-align:center;padding-left:2px;line-height:19px">0</div><div class="a" style="left:286px;top:208px;width:733px;height:19px;background:#efefef;border-radius:0 6px 6px 0"></div><div class="a" style="left:0;top:208px;width:286px;height:19px;text-align:center;padding-left:2px;font-weight:bold;line-height:19px">Nuit du 17/07/2017 au 18/07/2017</div><div class="a" style="left:286px;top:208px;width:178px;height:19px;text-align:center;padding-left:2px;line-height:19px;background:#e0e0e0">5</div><div class="a" style="left:464px;top:208px;width:178px;height:19px;text-align:center;padding-left:2px;line-height:19px">0</div><div class="a" style="left:642px;top:208px;width:178px;height:19px;text-align:center;padding-left:2px;line-height:19px">5</div><div class="a" style="left:820px;top:208px;width:178px;height:19px;text-align:center;padding-left:2px;line-height:19px">0</div></div>
</div>
<div class="a" style="left:0;top:674px;width:1138px;height:38px;background:#dfe8f6"></div>
<div class="btn" style="left:974px">Valider</div>
<div class="btn" style="left:1055px">Annuler</div>
</div></body></html>
